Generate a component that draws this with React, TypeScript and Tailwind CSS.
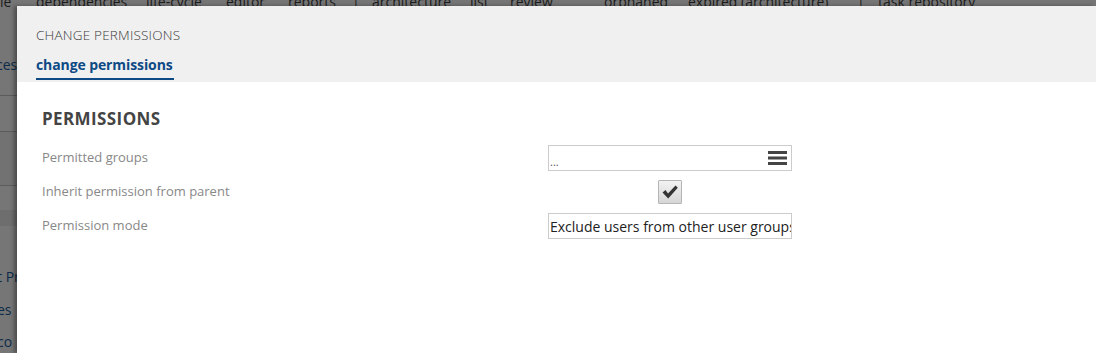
import React from "react";

const navItems = [
  { label: "le", w: "w-[36px]" },
  { label: "dependencies", w: "w-[110px]" },
  { label: "life-cycle", w: "w-[80px]" },
  { label: "editor", w: "w-[62px]" },
  { label: "reports", w: "w-[64px]" },
  { label: "|", w: "w-[20px]" },
  { label: "architecture", w: "w-[98px]" },
  { label: "list", w: "w-[40px]" },
  { label: "review", w: "w-[94px]" },
  { label: "orphaned", w: "w-[84px]" },
  { label: "expired (architecture)", w: "w-[169px]" },
  { label: "|", w: "w-[21px]" },
  { label: "task repository", w: "w-[120px]" },
];

function HamburgerIcon() {
  return (
    <svg width="19" height="16" viewBox="0 0 19 16">
      <rect x="0" y="1" width="19" height="3" fill="#444" />
      <rect x="0" y="6.5" width="19" height="3" fill="#444" />
      <rect x="0" y="12" width="19" height="3" fill="#444" />
    </svg>
  );
}

function CheckBox() {
  return (
    <div className="w-[24px] h-[24px] border border-[#b5b5b5] bg-gradient-to-b from-[#f2f2f2] to-[#d6d6d6] flex items-center justify-center rounded-[1px]">
      <svg width="18" height="16" viewBox="0 0 18 16">
        <path d="M1.5 8.5 L4.5 6 L7 9.5 L14.5 1.5 L16.8 3.8 L7.2 14.5 Z" fill="#333" />
      </svg>
    </div>
  );
}

function Row({ label, children, className = "" }: { label: string; children: React.ReactNode; className?: string }) {
  return (
    <div className={`flex items-center ${className}`}>
      <div className="w-[506px] text-[13px] text-[#888]">{label}</div>
      <div className="w-[244px]">{children}</div>
    </div>
  );
}

export default function App() {
  return (
    <div
      className="relative w-[1096px] h-[353px] overflow-hidden bg-[#767676]"
      style={{ fontFamily: '"Open Sans", "Noto Sans", sans-serif' }}
    >
      {/* dimmed page behind the dialog */}
      <div className="flex h-[6px] items-end text-[14px] leading-none text-[#1c1c1c] overflow-visible">
        {navItems.map((item, i) => (
          <span key={i} className={`${item.w} shrink-0 -mb-[3px]`}>
            {item.label}
          </span>
        ))}
      </div>
      <div className="w-[17px] flex flex-col text-[14px] text-[#0c2b49]">
        <div className="h-[66px] flex items-end">
          <span className="-ml-[4px] leading-none">ces</span>
        </div>
        <div className="h-[24px] border-b border-[#5c5c5c]" />
        <div className="h-[36px] border-b border-[#5c5c5c]" />
        <div className="h-[54px] border-b border-[#5c5c5c] bg-[#727272]" />
        <div className="h-[24px]" />
        <div className="h-[16px] bg-[#6e6e6e]" />
        <div className="h-[44px]" />
        <span className="leading-none -ml-[3px] whitespace-nowrap">t Pr</span>
        <span className="leading-none mt-[19px] -ml-[3px]">es</span>
        <span className="leading-none mt-[18px] -ml-[3px]">co</span>
      </div>

      {/* dialog */}
      <div className="absolute left-[17px] top-[6px] right-0 bottom-0 bg-white shadow-[-3px_0_4px_rgba(0,0,0,0.35)] flex flex-col">
        <div className="bg-[#f0f0f0] h-[76px] pl-[19px] flex flex-col">
          <div className="pt-[20px] text-[13.5px] leading-[18px] text-[#3a3a3a] font-light tracking-[0.2px]">
            CHANGE PERMISSIONS
          </div>
          <div className="mt-[12px] self-start">
            <div className="text-[14px] leading-[18px] font-bold text-[#0d4a85] tracking-[-0.1px]">
              change permissions
            </div>
            <div className="mt-[4px] h-[2px] bg-[#0d4a85] w-[138px]" />
          </div>
        </div>

        <div className="pl-[25px] pt-[27px] flex flex-col">
          <h2 className="text-[17px] leading-[20px] font-bold text-[#444] tracking-[0.4px]">PERMISSIONS</h2>
          <Row label="Permitted groups" className="mt-[16px]">
            <div className="h-[26px] border border-[#cccccc] flex items-center justify-between pl-[1px] pr-[4px]">
              <span className="text-[11px] text-[#555] leading-none pt-[6px]">...</span>
              <HamburgerIcon />
            </div>
          </Row>
          <Row label="Inherit permission from parent" className="mt-[9px]">
            <div className="flex justify-center">
              <CheckBox />
            </div>
          </Row>
          <Row label="Permission mode" className="mt-[9px]">
            <div className="h-[26px] border border-[#cccccc] flex items-center overflow-hidden pl-[1px]">
              <span className="whitespace-nowrap text-[14px] text-[#222]">
                Exclude users from other user groups
              </span>
            </div>
          </Row>
        </div>
      </div>
    </div>
  );
}
